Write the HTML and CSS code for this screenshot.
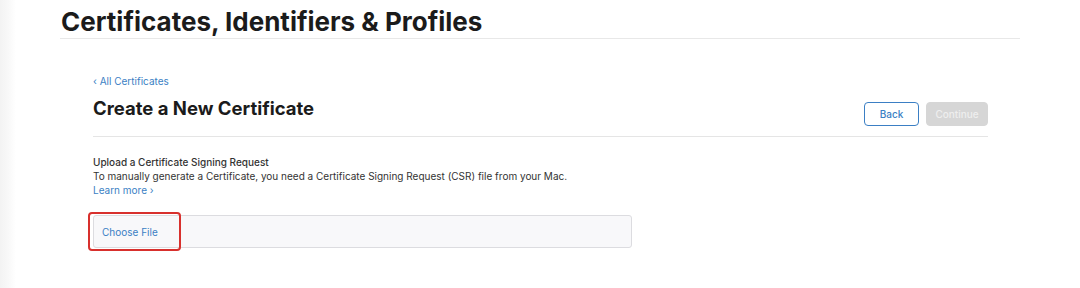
FILE: index.html
```html
<!DOCTYPE html>
<html lang="en">
<head>
<meta charset="utf-8">
<title>Create a New Certificate</title>
<link rel="stylesheet" href="styles.css">
</head>
<body>
<div class="page">
  <header class="page-header">
    <h1 class="page-title">Certificates, Identifiers &amp; Profiles</h1>
  </header>
  <main class="content">
    <a class="back-link" href="#">‹ All Certificates</a>
    <div class="title-row">
      <h2 class="section-title">Create a New Certificate</h2>
      <div class="actions">
        <button class="btn btn-outline" type="button">Back</button>
        <button class="btn btn-disabled" type="button" disabled>Continue</button>
      </div>
    </div>
    <section class="upload">
      <h3 class="upload-title">Upload a Certificate Signing Request</h3>
      <p class="upload-desc">To manually generate a Certificate, you need a Certificate Signing Request (CSR) file from your Mac.</p>
      <a class="learn-more" href="#">Learn more ›</a>
      <div class="file-field">
        <span class="choose-file">Choose File</span>
        <span class="highlight"></span>
      </div>
    </section>
  </main>
</div>
</body>
</html>
```
FILE: styles.css
```css
* { box-sizing: border-box; }
html, body { margin: 0; padding: 0; }
body {
  width: 1080px;
  height: 288px;
  overflow: hidden;
  background: linear-gradient(to right, #f3f3f3 0, #f8f8f8 8px, #ffffff 16px);
  font-family: Inter, "Noto Sans", sans-serif;
  color: #1d1d1f;
}
.page { display: flex; flex-direction: column; }
.page-header {
  margin-left: 60px;
  width: 960px;
  border-bottom: 1px solid #e8e8e8;
  padding-top: 6px;
  height: 39px;
}
.page-title {
  margin: 0 0 0 1px;
  font-size: 26px;
  font-weight: 700;
  line-height: 32px;
  color: #1b1b1b;
}
.content {
  margin-left: 93px;
  width: 895px;
  padding-top: 35px;
  display: flex;
  flex-direction: column;
}
.back-link {
  font-size: 10px;
  line-height: 14px;
  color: #3b7fc4;
  text-decoration: none;
  align-self: flex-start;
}
.title-row {
  display: flex;
  justify-content: space-between;
  align-items: center;
  margin-top: 6px;
  height: 36px;
  border-bottom: 1px solid #e5e5e5;
  padding-bottom: 6px;
  box-sizing: content-box;
}
.section-title {
  margin: 0;
  font-size: 18.5px;
  font-weight: 700;
  line-height: 24px;
  color: #1b1b1b;
  align-self: flex-start;
  margin-top: 2px;
}
.actions { display: flex; gap: 7px; align-self: flex-start; margin-top: 8px; }
.btn {
  font-family: Inter, "Noto Sans", sans-serif;
  font-size: 10px;
  height: 24px;
  border-radius: 4px;
  padding: 0;
  font-weight: 500;
}
.btn-outline {
  width: 55px;
  background: #fff;
  border: 1px solid #3b7fc4;
  color: #3b7fc4;
}
.btn-disabled {
  width: 62px;
  background: #d6d6d6;
  border: 1px solid #d6d6d6;
  color: #eeeeee;
}
.upload { padding-top: 18px; display: flex; flex-direction: column; }
.upload-title {
  margin: 0;
  font-size: 10px;
  font-weight: 500;
  line-height: 14px;
  color: #333;
}
.upload-desc {
  margin: 0;
  font-size: 10px;
  line-height: 14px;
  color: #333;
}
.learn-more {
  font-size: 10px;
  line-height: 14px;
  color: #3b7fc4;
  text-decoration: none;
  align-self: flex-start;
}
.file-field {
  position: relative;
  margin-top: 18px;
  width: 539px;
  height: 33px;
  background: #f8f8fa;
  border: 1px solid #dcdce0;
  border-radius: 3px;
  display: flex;
  align-items: center;
  padding-left: 8px;
}
.choose-file {
  font-size: 10px;
  color: #3b7fc4;
}
.highlight {
  position: absolute;
  left: -6px;
  top: -4px;
  width: 93px;
  height: 39px;
  border: 2px solid #d8302d;
  border-radius: 4px;
}
```
